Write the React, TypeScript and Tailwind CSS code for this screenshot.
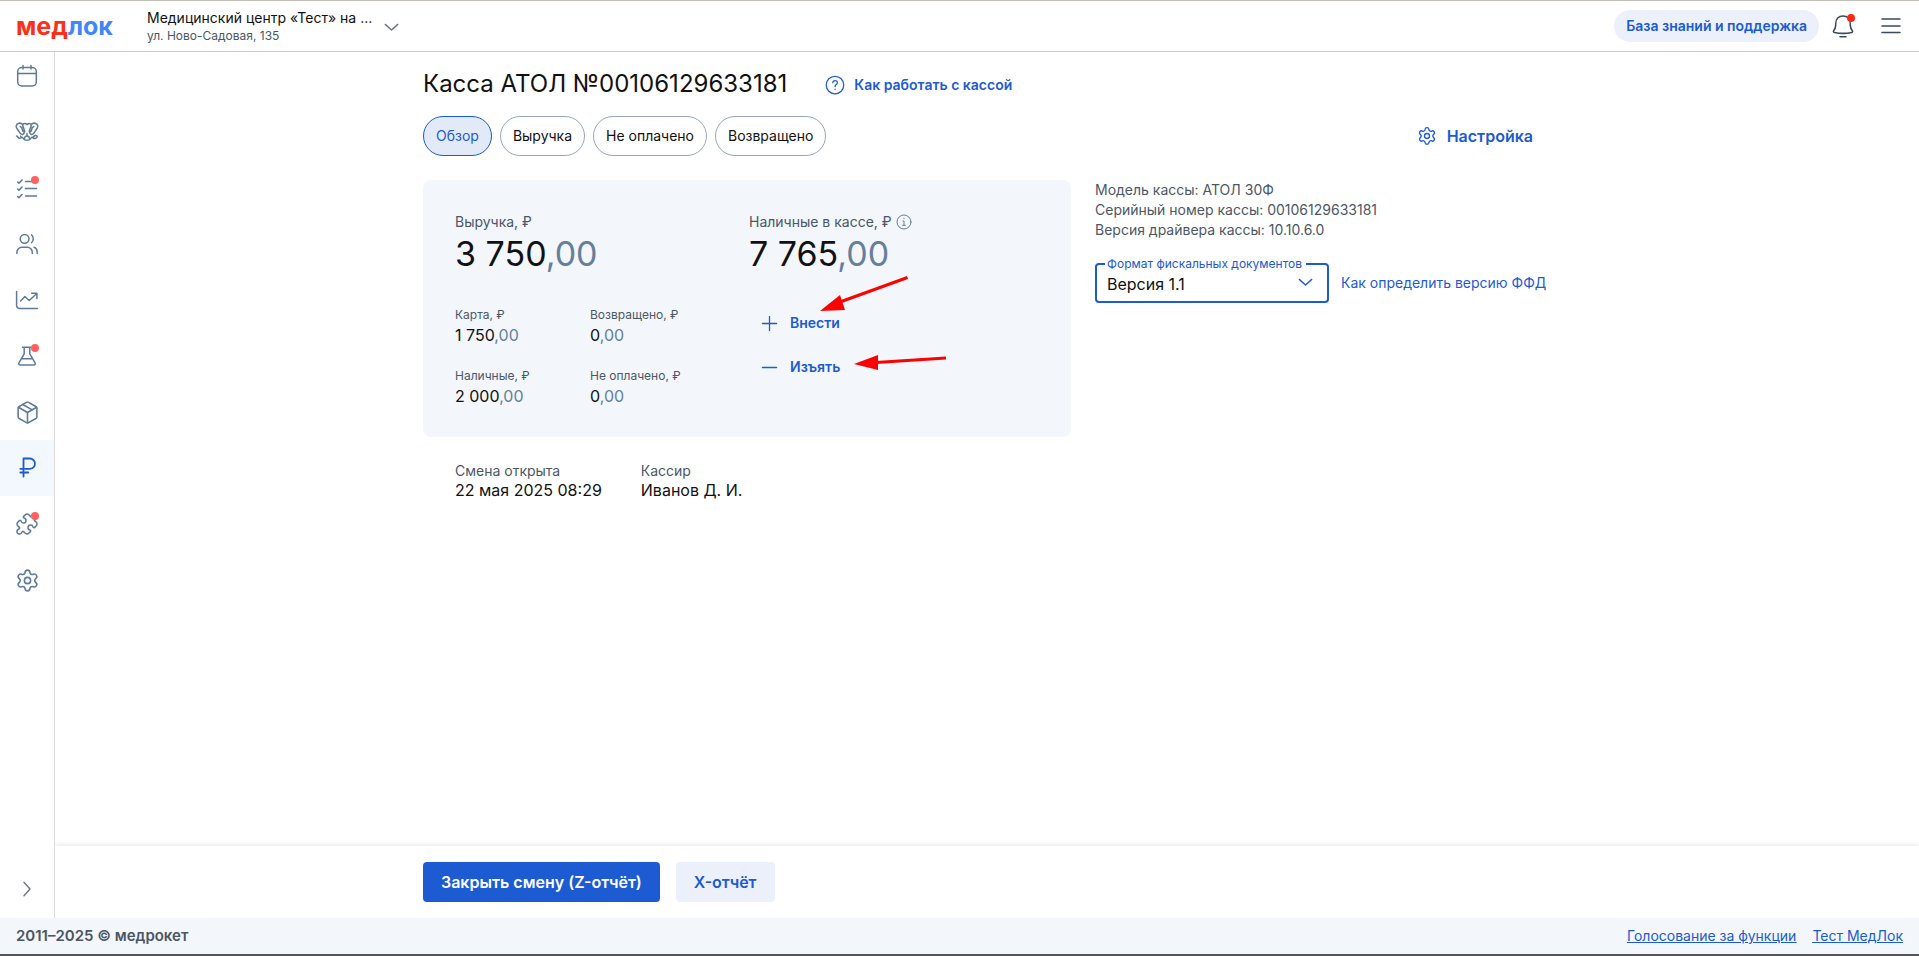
import { useState } from "react";
import type { ReactNode } from "react";
import { Package, Puzzle, Settings } from "lucide-react";

function Svg({ size = 24, width = 1.5, children }: { size?: number; width?: number; children: ReactNode }) {
  return (
    <svg
      width={size}
      height={size}
      viewBox="0 0 24 24"
      fill="none"
      stroke="currentColor"
      strokeWidth={width}
      strokeLinecap="round"
      strokeLinejoin="round"
      aria-hidden="true"
    >
      {children}
    </svg>
  );
}

const navItems: { label: string; icon: ReactNode; dot?: boolean }[] = [
  {
    label: "Расписание",
    icon: (
      <Svg>
        <rect x="2.7" y="3.6" width="18.6" height="18.4" rx="4" />
        <path d="M2.7 9.5h18.6M8 1.5V5M16 1.5V5" />
      </Svg>
    ),
  },
  {
    label: "Зубная формула",
    icon: (
      <Svg width={1.5}>
        <path d="M12 4.500c-1.600-1.500-4-1.300-4.200.7.100 2.300 1.500 3.300 1.400 5.300-.2 1.400-1.700 1-1.700-.3-.2-1.900-1-3.200-2.300-3.700M7.600 4.500C5.800 2.300 1.800 2.800 1.200 5.800c-.3 2.600 1.800 3.700 2.800 5.700.8 1.700 2.400 3.400 4 2.700 1.300-.7 1-1.900 1.800-3.200" />
        <path d="M12 4.500c1.600-1.500 4-1.300 4.200.7-.1 2.300-1.500 3.300-1.400 5.300.2 1.400 1.700 1 1.700-.3.2-1.900 1-3.200 2.300-3.700M16.400 4.500c1.800-2.200 5.800-1.700 6.400 1.300.3 2.600-1.800 3.700-2.800 5.700-.8 1.700-2.400 3.400-4 2.700-1.300-.7-1-1.900-1.800-3.200" />
        <path d="M1.500 16c1.200 0 1.200 1.800 2.500 2.200 1.400.5 2-.9 3.200-.6 1.400.3 1.200 1.800 2.600 2.300 1.400.5 3 .5 4.400 0 1.400-.5 1.200-2 2.600-2.300 1.200-.3 1.900 1.200 3.500.8 2.300-.7 2.500-3 .4-3-1.600 0-2 1.700-3.900 2.200M9.700 18.300c0-1.500.8-2.300 2.300-2.300s2.300.8 2.300 2.300M12 13.500V16M7.200 17.600c-.8-.2-1.200-.8-1.600-1.500" />
      </Svg>
    ),
  },
  {
    label: "Задачи",
    dot: true,
    icon: (
      <Svg width={1.6}>
        <path d="M10.500 5.500h11M10.500 12.500h11M10.500 20h11M2.600 6l1.300 1.200L7 4M2.600 13l1.300 1.200L7 11M2.600 20.500l1.300 1.200L7 18.500" />
      </Svg>
    ),
  },
  {
    label: "Пациенты",
    icon: (
      <Svg>
        <circle cx="9.600" cy="6.800" r="4.400" />
        <path d="M16.500 2.800c2.300 1.700 2.300 6.300 0 8M1.900 21.500v-1.300a5 5 0 0 1 5-5h5.400a5 5 0 0 1 5 5v1.300M19 15.300c2 .7 3.200 2.500 3.200 4.900v1.300" />
      </Svg>
    ),
  },
  {
    label: "Отчёты",
    icon: (
      <Svg>
        <path d="M1.600 3.500v14a3 3 0 0 0 3 3h17.900M5.700 13l4.200-4.500 4.300 4 7.600-7M16.600 5.300h5.300v5.200" />
      </Svg>
    ),
  },
  {
    label: "Лаборатория",
    dot: true,
    icon: (
      <Svg>
        <path d="M7.500 3.200h8.800M9.200 3.500v6.300L4.100 18.600c-.8 1.400-.2 2.400 1.300 2.400h13.200c1.500 0 2.100-1 1.300-2.400l-5.100-8.800V3.500M6.500 14.800h11" />
      </Svg>
    ),
  },
  { label: "Склад", icon: <Package size={25} strokeWidth={1.5} /> },
  {
    label: "Касса",
    icon: (
      <Svg width={1.8}>
        <path d="M8.500 20.500V2.500h6.300a5 5 0 0 1 0 10.300H5.300M5.300 16.500h8" />
      </Svg>
    ),
  },
  { label: "Интеграции", dot: true, icon: <Puzzle size={24} strokeWidth={1.5} /> },
  { label: "Настройки", icon: <Settings size={25} strokeWidth={1.5} /> },
];

function Header() {
  return (
    <header className="relative z-10 flex h-[52px] items-center border-t border-b border-t-[#c4beb8] border-b-[#c5cddd] bg-white px-4">
      <a href="#" className="w-[131px] text-[25px] leading-8 font-bold text-[#fa3018]">
        мед<span className="text-[#3f86f7]">лок</span>
      </a>
      <button className="flex items-center gap-3 pt-[2px] text-left">
        <span>
          <span className="block text-sm leading-[18px] text-[#111]">Медицинский центр «Тест» на ...</span>
          <span className="block text-xs leading-[18px] text-[#4b5768]">ул. Ново-Садовая, 135</span>
        </span>
        <span className="text-[#6b7280]">
          <Svg size={15} width={2.2}>
            <path d="M2 7l10 9L22 7" />
          </Svg>
        </span>
      </button>
      <button className="ml-auto h-8 rounded-full bg-[#ebf0fb] px-3 text-sm font-semibold text-[#1c5bd1]">
        База знаний и поддержка
      </button>
      <button aria-label="Уведомления" className="relative ml-3 text-[#3a4a5c]">
        <Svg>
          <path d="M12 2C7.500 2 4.800 5 4.800 9.500c0 4-.6 5.500-2 7-.8 1-.4 1.700.5 1.900 5.800 1.300 11.600 1.300 17.400 0 .9-.2 1.300-.9.500-1.900-1.400-1.500-2-3-2-7C19.200 5 16.500 2 12 2ZM9 22.700h6" />
        </Svg>
        <span className="absolute top-0 right-0 size-2 rounded-full bg-[#ff2a12]" />
      </button>
      <button aria-label="Меню" className="ml-6 text-[#3a4a5c]">
        <Svg>
          <path d="M3 5h18M3 12h18M3 18.500h18" />
        </Svg>
      </button>
    </header>
  );
}

function Sidebar() {
  return (
    <aside className="flex w-[55px] shrink-0 flex-col border-r border-[#dcdcdf]">
      <nav className="-mt-1">
        {navItems.map((item) => (
          <a
            key={item.label}
            href="#"
            aria-label={item.label}
            className={
              item.label === "Касса"
                ? "flex h-14 items-center justify-center bg-[#f3f7fe] text-[#1c5bd1]"
                : "flex h-14 items-center justify-center text-[#5d7b98]"
            }
          >
            <span className="relative">
              {item.icon}
              {item.dot && <span className="absolute top-0 right-0 size-2 rounded-full bg-[#ff6262]" />}
            </span>
          </a>
        ))}
      </nav>
      <button aria-label="Развернуть меню" className="mt-auto flex h-[58px] justify-center pt-5 text-[#6b7280]">
        <Svg size={18} width={1.8}>
          <path d="M8 3l8 9-8 9" />
        </Svg>
      </button>
    </aside>
  );
}

function Amount({ label, rub, big }: { label: ReactNode; rub: string; big?: boolean }) {
  return (
    <div>
      <div className={big ? "flex items-center gap-1 text-sm leading-5 text-[#4b5768]" : "text-xs leading-5 text-[#4b5768]"}>
        {label}
      </div>
      <div className={big ? "text-[34px] leading-11 text-[#111]" : "text-base leading-5 text-[#111]"}>
        {rub}
        <span className="text-[#64809b]">,00</span>
      </div>
    </div>
  );
}

function Summary() {
  return (
    <section className="relative flex h-[257px] w-[648px] shrink-0 rounded-lg bg-[#f3f6fb] px-8 pt-8">
      <div className="w-[294px]">
        <Amount big label="Выручка, ₽" rub="3 750" />
        <div className="mt-[29px] grid grid-cols-[135px_1fr] gap-y-[21px]">
          <Amount label="Карта, ₽" rub="1 750" />
          <Amount label="Возвращено, ₽" rub="0" />
          <Amount label="Наличные, ₽" rub="2 000" />
          <Amount label="Не оплачено, ₽" rub="0" />
        </div>
      </div>
      <div>
        <Amount
          big
          label={
            <>
              Наличные в кассе, ₽
              <span className="text-[#64809b]">
                <Svg size={16}>
                  <circle cx="12" cy="12" r="10.500" />
                  <path d="M10.500 10.500H12V17M10 17h4M12 6.500v.5" />
                </Svg>
              </span>
            </>
          }
          rub="7 765"
        />
        <div className="mt-[25px] flex flex-col items-start px-3 text-sm font-semibold text-[#1c5bd1]">
          <button className="flex h-11 items-center gap-3">
            <Svg size={17} width={1.8}>
              <path d="M12 2v20M2 12h20" />
            </Svg>
            Внести
          </button>
          <button className="flex h-11 items-center gap-3">
            <Svg size={17} width={1.8}>
              <path d="M2 12h20" />
            </Svg>
            Изъять
          </button>
        </div>
      </div>
      <svg width="648" height="257" className="pointer-events-none absolute top-0 left-0" fill="#f00" aria-hidden="true">
        <path d="M484.500 97.500L417 122" stroke="#f00" strokeWidth="3" />
        <path d="M397 131l20-16 5 15z" />
        <path d="M523 178l-70 4.500" stroke="#f00" strokeWidth="3" />
        <path d="M431 184l24-9v15z" />
      </svg>
    </section>
  );
}

function DeviceInfo() {
  return (
    <section className="text-sm leading-5 text-[#4b5768]">
      <p>Модель кассы: АТОЛ 30Ф</p>
      <p>Серийный номер кассы: 00106129633181</p>
      <p>Версия драйвера кассы: 10.10.6.0</p>
      <div className="mt-[23px] flex items-center gap-3">
        <div className="relative text-[#1c5bd1]">
          <label htmlFor="ffd" className="absolute -top-[7px] left-[10px] bg-white pr-1 pl-[2px] text-xs leading-4">
            Формат фискальных документов
          </label>
          <select
            id="ffd"
            className="block h-10 w-[234px] appearance-none rounded border-2 border-[#1c5bd1] bg-white px-[10px] pt-[2px] text-base text-[#111]"
          >
            <option>Версия 1.1</option>
            <option>Версия 1.05</option>
          </select>
          <span className="pointer-events-none absolute top-3 right-4">
            <Svg size={15} width={2.2}>
              <path d="M2 7l10 9L22 7" />
            </Svg>
          </span>
        </div>
        <a href="#" className="text-[#1c5bd1]">
          Как определить версию ФФД
        </a>
      </div>
    </section>
  );
}

const tabs = ["Обзор", "Выручка", "Не оплачено", "Возвращено"];

export default function App() {
  const [tab, setTab] = useState("Обзор");

  return (
    <div className="flex min-h-screen flex-col bg-white font-['Inter','Liberation_Sans',sans-serif] text-[#111]">
      <Header />
      <div className="flex flex-1">
        <Sidebar />
        <div className="flex flex-1 flex-col overflow-hidden">
          <main className="mx-auto w-full max-w-[1128px] flex-1 pt-4">
            <div className="flex items-center gap-[38px]">
              <h1 className="text-2xl leading-8">Касса АТОЛ №00106129633181</h1>
              <a href="#" className="flex items-center gap-[9px] pt-[2px] text-sm font-semibold text-[#1c5bd1]">
                <Svg size={20}>
                  <circle cx="12" cy="12" r="10.500" />
                  <path d="M9.300 9.300c.2-1.700 1.300-2.600 2.800-2.600 1.600 0 2.700 1 2.700 2.500 0 2.200-2.700 2.300-2.700 4.600M12.100 17v.3" />
                </Svg>
                Как работать с кассой
              </a>
            </div>
            <div className="mt-4 flex items-center gap-2">
              {tabs.map((name) => (
                <button
                  key={name}
                  onClick={() => setTab(name)}
                  className={
                    name === tab
                      ? "h-10 rounded-full border border-[#1c5bd1] bg-[#e2eaf8] px-3 text-sm text-[#1c5bd1]"
                      : "h-10 rounded-full border border-[#94a9c1] px-3 text-sm"
                  }
                >
                  {name}
                </button>
              ))}
              <button className="ml-auto flex items-center gap-[10px] pr-[18px] text-base font-semibold text-[#1c5bd1]">
                <Settings size={20} strokeWidth={1.6} />
                Настройка
              </button>
            </div>
            <div className="mt-6 flex gap-6">
              <Summary />
              <DeviceInfo />
            </div>
            <dl className="mt-6 flex gap-[39px] px-8">
              <div>
                <dt className="text-sm leading-5 text-[#4b5768]">Смена открыта</dt>
                <dd className="leading-[18px]">22 мая 2025 08:29</dd>
              </div>
              <div>
                <dt className="text-sm leading-5 text-[#4b5768]">Кассир</dt>
                <dd className="leading-[18px]">Иванов Д. И.</dd>
              </div>
            </dl>
          </main>
          <div className="py-4 shadow-[0_0_6px_rgba(0,0,0,0.14)]">
            <div className="mx-auto flex max-w-[1128px] gap-4 font-semibold">
              <button className="h-10 rounded bg-[#1c5bd1] px-[18px] text-white">Закрыть смену (Z-отчёт)</button>
              <button className="h-10 rounded bg-[#ebf0fb] px-[18px] text-[#1c5bd1]">X-отчёт</button>
            </div>
          </div>
        </div>
      </div>
      <footer className="flex h-[38px] items-center border-b-2 border-[#55565b] bg-[#f3f6fb] px-4 text-sm">
        <span className="text-[15px] font-semibold text-[#4b5563]">2011–2025 © медрокет</span>
        <nav className="ml-auto flex gap-4 text-[#1c5bd1] underline">
          <a href="#">Голосование за функции</a>
          <a href="#">Тест МедЛок</a>
        </nav>
      </footer>
    </div>
  );
}
